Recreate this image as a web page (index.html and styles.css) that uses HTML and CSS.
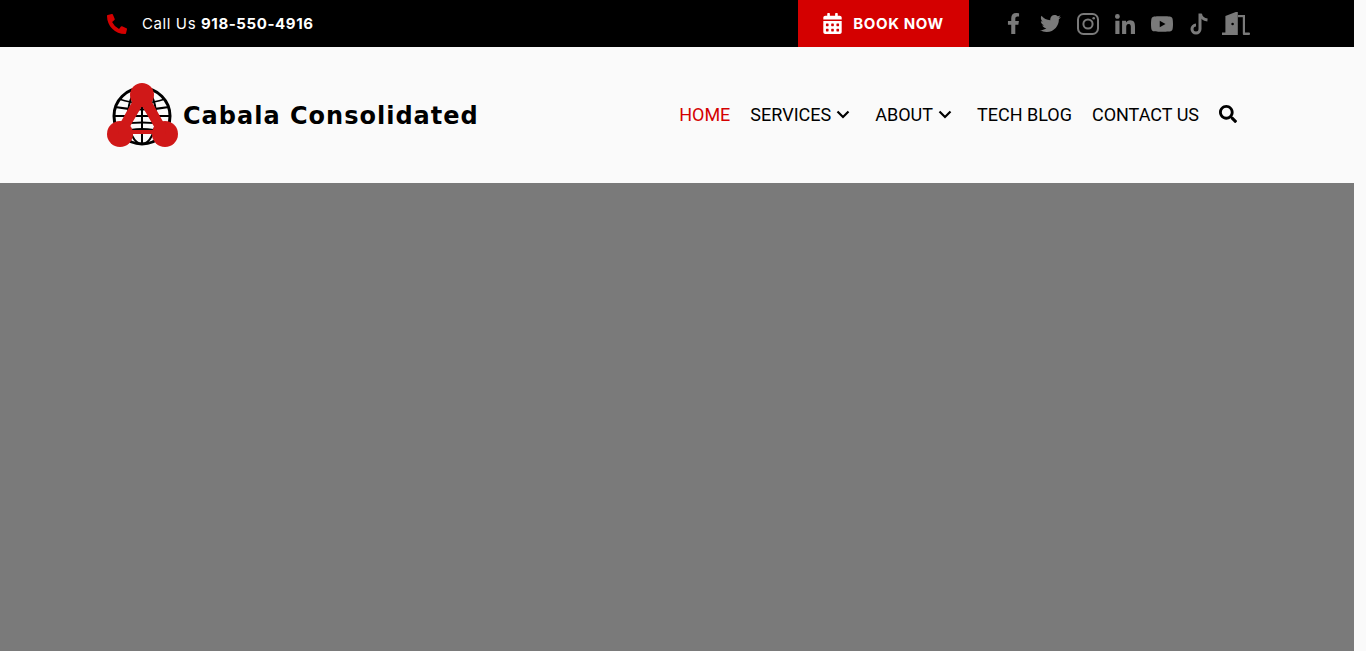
FILE: index.html
```html
<!DOCTYPE html>
<html lang="en">
<head>
    <meta charset="UTF-8">
    <meta name="viewport" content="width=device-width, initial-scale=1.0">
    <title>Cabala Consolidated</title>
    <link rel="stylesheet" href="styles.css">
</head>
<body>
<div class="page">

    <!-- Top Bar -->
    <div class="topbar">
        <div class="call">
            <svg class="call-icon" viewBox="0 0 512 512"><path d="M497.39 361.8l-112-48a24 24 0 0 0-28 6.9l-49.6 60.6A370.66 370.66 0 0 1 130.6 204.11l60.6-49.6a23.94 23.94 0 0 0 6.9-28l-48-112A24.16 24.16 0 0 0 122.6.61l-104 24A24 24 0 0 0 0 48c0 256.5 207.9 464 464 464a24 24 0 0 0 23.4-18.6l24-104a24.29 24.29 0 0 0-14.01-27.6z"/></svg>
            <span>Call Us <b>918-550-4916</b></span>
        </div>
        <div class="top-right">
            <a class="book" href="#">
                <svg class="book-icon" viewBox="0 0 448 512"><path d="M0 464c0 26.5 21.5 48 48 48h352c26.5 0 48-21.5 48-48V192H0v272zm320-196c0-6.6 5.4-12 12-12h40c6.6 0 12 5.4 12 12v40c0 6.6-5.4 12-12 12h-40c-6.6 0-12-5.4-12-12v-40zm0 128c0-6.6 5.4-12 12-12h40c6.6 0 12 5.4 12 12v40c0 6.6-5.4 12-12 12h-40c-6.6 0-12-5.4-12-12v-40zM192 268c0-6.6 5.4-12 12-12h40c6.6 0 12 5.4 12 12v40c0 6.6-5.4 12-12 12h-40c-6.6 0-12-5.4-12-12v-40zm0 128c0-6.6 5.4-12 12-12h40c6.6 0 12 5.4 12 12v40c0 6.6-5.4 12-12 12h-40c-6.6 0-12-5.4-12-12v-40zM64 268c0-6.6 5.4-12 12-12h40c6.6 0 12 5.4 12 12v40c0 6.6-5.4 12-12 12H76c-6.6 0-12-5.4-12-12v-40zm0 128c0-6.6 5.4-12 12-12h40c6.6 0 12 5.4 12 12v40c0 6.6-5.4 12-12 12H76c-6.6 0-12-5.4-12-12v-40zM400 64h-48V16c0-8.8-7.2-16-16-16h-32c-8.8 0-16 7.2-16 16v48H160V16c0-8.8-7.2-16-16-16h-32c-8.8 0-16 7.2-16 16v48H48C21.5 64 0 85.5 0 112v48h448v-48c0-26.5-21.5-48-48-48z"/></svg>
                BOOK NOW
            </a>
            <div class="socials">
                <a href="#"><svg class="ico-f" viewBox="0 0 320 512"><path d="M279.14 288l14.22-92.66h-88.91v-60.13c0-25.35 12.42-50.06 52.24-50.06h40.42V6.26S260.43 0 225.36 0c-73.22 0-121.08 44.38-121.08 124.72v70.62H22.89V288h81.39v224h100.17V288z"/></svg></a>
                <a href="#"><svg class="ico-tw" viewBox="0 0 512 512"><path d="M459.37 151.716c.325 4.548.325 9.097.325 13.645 0 138.72-105.583 298.558-298.558 298.558-59.452 0-114.68-17.219-161.137-47.106 8.447.974 16.568 1.299 25.34 1.299 49.055 0 94.213-16.568 130.274-44.832-46.132-.975-84.792-31.188-98.112-72.772 6.498.974 12.995 1.624 19.818 1.624 9.421 0 18.843-1.3 27.614-3.573-48.081-9.747-84.143-51.98-84.143-102.985v-1.299c13.969 7.797 30.214 12.67 47.431 13.319-28.264-18.843-46.781-51.005-46.781-87.391 0-19.492 5.197-37.36 14.294-52.954 51.655 63.675 129.3 105.258 216.365 109.807-1.624-7.797-2.599-15.918-2.599-24.04 0-57.828 46.782-104.934 104.934-104.934 30.213 0 57.502 12.67 76.67 33.137 23.715-4.548 46.456-13.32 66.599-25.34-7.798 24.366-24.366 44.833-46.132 57.827 21.117-2.273 41.584-8.122 60.426-16.243-14.292 20.791-32.161 39.308-52.628 54.253z"/></svg></a>
                <a href="#"><svg class="ico-ig" viewBox="0 0 22 22"><rect x="1" y="1" width="20" height="20" rx="5.5" fill="none" stroke="#7a7a7a" stroke-width="2"/><circle cx="11" cy="11" r="4.6" fill="none" stroke="#7a7a7a" stroke-width="2"/><circle cx="16.7" cy="5.3" r="1.3"/></svg></a>
                <a href="#"><svg class="ico-in" viewBox="0 0 448 448"><path d="M100.28 448H7.4V148.9h92.88zM53.79 108.1C24.09 108.1 0 83.5 0 53.8a53.79 53.79 0 0 1 107.58 0c0 29.7-24.1 54.3-53.79 54.3zM447.9 448h-92.68V302.4c0-34.7-.7-79.2-48.29-79.2-48.29 0-55.69 37.7-55.69 76.7V448h-92.78V148.9h89.08v40.8h1.3c12.4-23.5 42.69-48.3 87.88-48.3 94 0 111.28 61.9 111.28 142.3V448z"/></svg></a>
                <a href="#"><svg class="ico-yt" viewBox="15 64 546 384"><path d="M549.655 124.083c-6.281-23.65-24.787-42.276-48.284-48.597C458.781 64 288 64 288 64S117.22 64 74.629 75.486c-23.497 6.322-42.003 24.947-48.284 48.597-11.412 42.867-11.412 132.305-11.412 132.305s0 89.438 11.412 132.305c6.281 23.65 24.787 41.5 48.284 47.821C117.22 448 288 448 288 448s170.78 0 213.371-11.486c23.497-6.321 42.003-24.171 48.284-47.821 11.412-42.867 11.412-132.305 11.412-132.305s0-89.438-11.412-132.305zm-317.51 213.508V175.185l142.739 81.205-142.739 81.201z"/></svg></a>
                <a href="#"><svg class="ico-tt" viewBox="0 0 20 22"><path d="M11 0.500v15.600a4 4 0 1 1-4-4" fill="none" stroke="#7a7a7a" stroke-width="3"/><path d="M11.500 1c.6 3.400 3 5.600 7 6" fill="none" stroke="#7a7a7a" stroke-width="3"/></svg></a>
                <a href="#"><svg class="ico-door" viewBox="0 0 28 23"><path d="M0 23v-2.600h3.400V4L13.800 0h2v23z"/><rect x="16" y="3" width="7" height="2.200"/><rect x="20.800" y="3" width="2.200" height="18"/><rect x="20.800" y="20.400" width="7.200" height="2.600" rx="1"/><circle cx="10.600" cy="12" r="1.300" fill="#000"/></svg></a>
            </div>
        </div>
    </div>

    <!-- Header -->
    <header class="header">
        <a class="logo" href="#">
            <svg class="logo-mark" viewBox="0 0 71 64">
                <g fill="none" stroke="#000">
                    <circle cx="35" cy="33" r="28" stroke-width="3"/>
                    <ellipse cx="35" cy="33" rx="14" ry="28" stroke-width="2"/>
                    <path d="M35 5v56M7 33h56" stroke-width="2"/>
                    <path d="M12 16q23 8 46 0M12 50q23-8 46 0M8 24q27 5 54 0M8 42q27-5 54 0" stroke-width="1.800"/>
                </g>
                <g fill="#d01818">
                    <circle cx="35" cy="12" r="12"/>
                    <circle cx="13" cy="51" r="13"/>
                    <circle cx="58" cy="51" r="13"/>
                    <path fill-rule="evenodd" d="M25 19L45 19 59 44 58 51 12 51 11 44zM35 23L49 47 21 47z"/>
                </g>
            </svg>
            <span class="logo-text">Cabala Consolidated</span>
        </a>
        <nav class="nav">
            <a class="nav-link active" href="#">HOME</a>
            <a class="nav-link has-sub" href="#">SERVICES
                <svg class="chev" viewBox="0 0 14 9"><path d="M1.500 1.500L7 7l5.500-5.500"/></svg>
            </a>
            <a class="nav-link has-sub" href="#">ABOUT
                <svg class="chev" viewBox="0 0 14 9"><path d="M1.500 1.500L7 7l5.500-5.500"/></svg>
            </a>
            <a class="nav-link" href="#">TECH BLOG</a>
            <a class="nav-link" href="#">CONTACT US</a>
            <a class="nav-link" href="#"><svg class="search" viewBox="0 0 512 512"><path d="M505 442.7L405.3 343c-4.5-4.5-10.6-7-17-7H372c27.600-35.300 44-79.700 44-128C416 93.100 322.900 0 208 0S0 93.100 0 208s93.100 208 208 208c48.300 0 92.700-16.400 128-44v16.300c0 6.400 2.500 12.500 7 17l99.700 99.700c9.400 9.400 24.600 9.400 33.900 0l28.300-28.300c9.400-9.400 9.400-24.600.1-34zM208 336c-70.700 0-128-57.200-128-128 0-70.700 57.200-128 128-128 70.700 0 128 57.200 128 128 0 70.700-57.200 128-128 128z"/></svg></a>
        </nav>
    </header>

    <!-- Hero placeholder -->
    <section class="hero"></section>

</div>
</body>
</html>
```

FILE: styles.css
```css
html, body {
    margin: 0;
    padding: 0;
    height: 651px;
    overflow: hidden;
    background-color: #fafafa;
}

a {
    color: inherit;
    text-decoration: none;
}

.page {
    width: 1354px;
}

.topbar {
    display: flex;
    justify-content: space-between;
    align-items: stretch;
    height: 47px;
    padding: 0 100px 0 107px;
    background-color: #000;
    color: #fff;
    font-family: "Inter", "Open Sans", sans-serif;
    font-size: 15px;
    letter-spacing: 0.6px;
}

.call {
    display: flex;
    align-items: center;
    gap: 15px;
}

.call b {
    font-weight: 700;
}

.call-icon {
    width: 20px;
    height: 20px;
    fill: #d40000;
}

.top-right {
    display: flex;
}

.book {
    display: flex;
    align-items: center;
    justify-content: center;
    gap: 11px;
    width: 171px;
    background-color: #d40000;
    font-weight: 700;
    font-size: 15px;
}

.book-icon {
    width: 19px;
    height: 21px;
    fill: #fff;
}

.socials {
    display: flex;
    margin-left: 26px;
}

.socials a {
    display: flex;
    align-items: center;
    justify-content: center;
    width: 37px;
}

.socials svg {
    fill: #7a7a7a;
}

.ico-f { width: 13px; height: 21px; }
.ico-tw { width: 21px; height: 21px; }
.ico-ig { width: 22px; height: 22px; }
.ico-in { width: 20px; height: 20px; }
.ico-yt { width: 22px; height: 16px; }
.ico-tt { width: 20px; height: 22px; }
.ico-door { width: 28px; height: 23px; }

.header {
    display: flex;
    justify-content: space-between;
    align-items: center;
    height: 136px;
    padding: 0 117px 0 107px;
    background-color: #fafafa;
}

.logo {
    display: flex;
    align-items: center;
    gap: 5px;
    color: #000;
}

.logo-mark {
    width: 71px;
    height: 64px;
}

.logo-text {
    margin-top: 2px;
    font-family: "DejaVu Sans", sans-serif;
    font-size: 24px;
    font-weight: 700;
    letter-spacing: 1px;
}

.nav {
    display: flex;
    align-items: center;
    gap: 20px;
    padding-bottom: 2px;
    font-family: Roboto, sans-serif;
    font-size: 18px;
    color: #000;
}

.nav-link {
    display: flex;
    align-items: center;
}

.nav-link.active {
    color: #d40000;
}

.has-sub {
    gap: 5px;
    padding-right: 5px;
}

.chev {
    width: 14px;
    height: 9px;
    fill: none;
    stroke: #000;
    stroke-width: 2.2;
}

.search {
    width: 18px;
    height: 18px;
    fill: #000;
}

.hero {
    height: 468px;
    background-color: #7a7a7a;
}
```
